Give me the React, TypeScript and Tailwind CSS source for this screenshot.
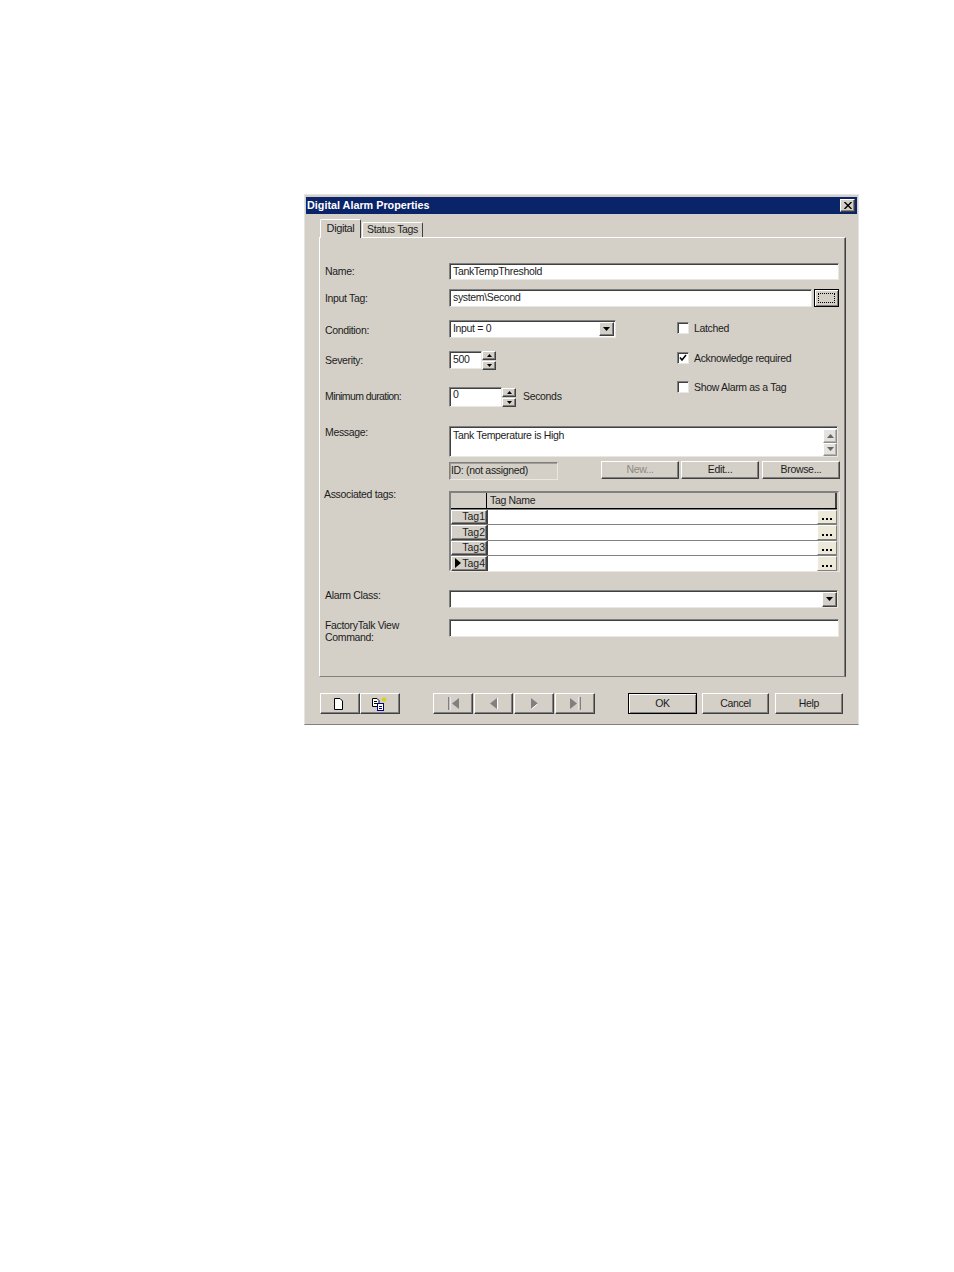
import type { ReactNode } from 'react';

const sunken = 'border border-t-[#808080] border-l-[#808080] border-r-[#e9e7e1] border-b-[#e9e7e1] shadow-[inset_1px_1px_0_#404040] bg-white';
const raised = 'border border-t-white border-l-white border-r-[#404040] border-b-[#404040] shadow-[inset_-1px_-1px_0_#808080] bg-[#d4d0c8]';

function Label({ children, className = '' }: { children: ReactNode; className?: string }) {
  return <div className={`w-[124px] shrink-0 leading-[12px] ${className}`}>{children}</div>;
}

function Btn({ children, className = '', disabled = false }: { children?: ReactNode; className?: string; disabled?: boolean }) {
  return (
    <button className={`${raised} flex items-center justify-center ${disabled ? 'text-[#8d8a84]' : ''} ${className}`}>
      {children}
    </button>
  );
}

function Arrow({ up = false, small = false }: { up?: boolean; small?: boolean }) {
  return (
    <svg width={small ? 5 : 7} height={small ? 3 : 4} viewBox="0 0 7 4" preserveAspectRatio="none" className={up ? '' : 'rotate-180'}>
      <path d="M3.5 0 L7 4 H0 Z" fill="#000" />
    </svg>
  );
}

function Spin() {
  return (
    <div className="flex flex-col gap-px">
      <Btn className="h-[9px] w-[14px]"><Arrow up small /></Btn>
      <Btn className="h-[9px] w-[14px]"><Arrow small /></Btn>
    </div>
  );
}

function Check({ label, checked = false, className = '' }: { label: string; checked?: boolean; className?: string }) {
  return (
    <div className={`flex items-center ${className}`}>
      <div className={`${sunken} h-[12px] w-[12px] flex items-center justify-center`}>
        {checked && (
          <svg width="8" height="8" viewBox="0 0 8 8">
            <path d="M1 3.5 L3 6 L7 1" stroke="#000" strokeWidth="1.5" fill="none" />
          </svg>
        )}
      </div>
      <span className="ml-[5px] leading-[12px]">{label}</span>
    </div>
  );
}

function TagRow({ name, current = false }: { name: string; current?: boolean }) {
  return (
    <div className="flex h-[15.4px] border-t border-[#808080] first:border-t-0">
      <div className={`${raised} w-[36px] flex items-center justify-end pr-[1px] text-[10.5px] tracking-normal`}>
        {current && (
          <svg width="6" height="10" viewBox="0 0 6 10" className="mr-[1px]">
            <path d="M0 0 L6 5 L0 10 Z" fill="#000" />
          </svg>
        )}
        {name}
      </div>
      <div className="flex-1 bg-white flex justify-end border-l border-[#404040]">
        <button className="w-[20px] bg-[#ece9d8] border border-t-white border-l-white border-r-[#808080] border-b-[#808080] flex items-end justify-center pb-[3px] gap-[2px]">
          <span className="w-[2px] h-[2px] bg-black" />
          <span className="w-[2px] h-[2px] bg-black" />
          <span className="w-[2px] h-[2px] bg-black" />
        </button>
      </div>
    </div>
  );
}

export default function App() {
  return (
    <div className="min-h-[1272px] bg-white pt-[194px] pl-[304px] text-[10.5px] tracking-[-0.33px] text-[#1c1c1c] font-['Liberation_Sans',Arial,sans-serif]">
      <div className="w-[555px] h-[531px] bg-[#d4d0c8] border border-t-[#e4e4e4] border-l-[#e4e4e4] border-r-[#e4e4e4] border-b-[#808080] px-[1px] pt-[2px]">
        {/* title bar */}
        <div className="h-[17px] bg-[#0a246a] flex items-center justify-between pl-[1px] pr-[2px] text-white font-bold text-[10.8px] tracking-normal">
          <span>Digital Alarm Properties</span>
          <button className={`${raised} w-[15px] h-[13px] flex items-center justify-center`}>
            <svg width="8" height="7" viewBox="0 0 8 7">
              <path d="M0.5 0 L7.5 7 M7.5 0 L0.5 7" stroke="#000" strokeWidth="1.4" />
            </svg>
          </button>
        </div>

        {/* tabs */}
        <div className="flex items-end h-[23px] pl-[14px] relative z-10">
          <div className="w-[41px] h-[19px] bg-[#d4d0c8] border border-t-white border-l-white border-r-[#404040] border-b-0 rounded-t-[2px] flex items-center justify-center text-[11px] tracking-[-0.4px] -mb-[1px] pb-[2px]">
            Digital
          </div>
          <div className="w-[61px] h-[15px] ml-[1px] bg-[#d4d0c8] border border-t-white border-l-white border-r-[#404040] border-b-0 rounded-t-[2px] flex items-center justify-center">
            Status Tags
          </div>
        </div>

        {/* tab page */}
        <div className="ml-[13px] w-[527px] h-[440px] border border-t-white border-l-white border-r-[#404040] border-b-[#808080] shadow-[inset_-1px_0_0_#808080] pl-[5px] pt-[25px]">
          <div className="flex items-center h-[17px]">
            <Label className="-mt-[1px]">Name:</Label>
            <div className={`${sunken} w-[390px] h-full pl-[3px] leading-[15px]`}>TankTempThreshold</div>
          </div>

          <div className="flex items-center h-[18px] mt-[9px]">
            <Label>Input Tag:</Label>
            <div className={`${sunken} w-[363px] h-full pl-[3px] leading-[15px]`}>system\Second</div>
            <button className="ml-[2px] w-[25px] h-[18px] border border-black bg-[#d4d0c8] shadow-[inset_1px_1px_0_#fff,inset_-1px_-1px_0_#808080] flex items-center justify-center">
              <span className="w-[17px] h-[10px] border border-dotted border-black" />
            </button>
          </div>

          <div className="flex mt-[13px]">
            <div className="w-[352px]">
              <div className="flex items-center h-[18px]">
                <Label className="mt-[2px]">Condition:</Label>
                <div className={`${sunken} w-[167px] h-full flex items-center justify-between pl-[3px]`}>
                  <span>Input = 0</span>
                  <Btn className="w-[15px] h-[14px] mr-[1px]"><Arrow /></Btn>
                </div>
              </div>
              <div className="flex items-center h-[18px] mt-[13px]">
                <Label>Severity:</Label>
                <div className={`${sunken} w-[33px] h-full pl-[3px] leading-[15px]`}>500</div>
                <Spin />
              </div>
              <div className="flex items-center h-[20px] mt-[18px]">
                <Label className="-mt-[2px] tracking-[-0.6px]">Minimum duration:</Label>
                <div className={`${sunken} w-[53px] h-full pl-[3px] leading-[13px]`}>0</div>
                <Spin />
                <span className="ml-[7px]">Seconds</span>
              </div>
            </div>
            <div className="pt-[2px]">
              <Check label="Latched" />
              <Check label="Acknowledge required" checked className="mt-[18px]" />
              <Check label="Show Alarm as a Tag" className="mt-[17px]" />
            </div>
          </div>

          <div className="flex h-[31px] mt-[19px]">
            <Label>Message:</Label>
            <div className={`${sunken} w-[389px] h-full pl-[3px] pt-[1px] flex justify-between`}>
              <span>Tank Temperature is High</span>
              <div className="flex flex-col pt-[1px]">
                <div className={`${raised} w-[14px] h-[14px] flex items-center justify-center opacity-60`}><Arrow up /></div>
                <div className={`${raised} w-[14px] h-[14px] flex items-center justify-center opacity-60`}><Arrow /></div>
              </div>
            </div>
          </div>

          <div className="flex h-[18px] mt-[4px]">
            <div className="w-[124px] shrink-0" />
            <div className="w-[109px] h-full mt-[1px] border border-t-[#808080] border-l-[#808080] border-r-[#e9e7e1] border-b-[#e9e7e1] pl-[1px] leading-[15px] shadow-[inset_1px_1px_0_#a09e98]">ID: (not assigned)</div>
            <Btn disabled className="w-[78px] h-full ml-[43px]">New...</Btn>
            <Btn className="w-[78px] h-full ml-[2px]">Edit...</Btn>
            <Btn className="w-[78px] h-full ml-[3px]">Browse...</Btn>
          </div>

          <div className="flex mt-[12px]">
            <Label className="-ml-[1px] mr-[1px] -mt-[3px]">Associated tags:</Label>
            <div className="w-[390px] h-[80px] border-2 border-[#808080] border-r-[#d4d0c8] border-b-[#d4d0c8] shadow-[1px_1px_0_#e9e7e1]">
              <div className="flex h-[16px] border-b border-black">
                <div className="w-[36px] border-r border-black" />
                <div className="flex-1 border-r-2 border-[#404040] pl-[3px] leading-[15px]">Tag Name</div>
              </div>
              <TagRow name="Tag1" />
              <TagRow name="Tag2" />
              <TagRow name="Tag3" />
              <TagRow name="Tag4" current />
            </div>
          </div>

          <div className="flex items-center h-[18px] mt-[19px]">
            <Label className="-mt-[8px]">Alarm Class:</Label>
            <div className={`${sunken} w-[389px] h-full flex items-center justify-end`}>
              <Btn className="w-[15px] h-[15px]"><Arrow /></Btn>
            </div>
          </div>

          <div className="flex h-[18px] mt-[11px]">
            <Label className="leading-[11px]">FactoryTalk View Command:</Label>
            <div className={`${sunken} w-[390px] h-full`} />
          </div>
        </div>

        {/* bottom buttons */}
        <div className="flex h-[21px] mt-[16px] ml-[14px]">
          <Btn className="w-[40px] h-full pr-[3px]">
            <svg width="9" height="12" viewBox="0 0 9 12">
              <path d="M0.5 0.5 H6 L8.5 3 V11.5 H0.5 Z" fill="#fff" stroke="#000" />
            </svg>
          </Btn>
          <Btn className="w-[40px] h-full">
            <svg width="16" height="14" viewBox="0 0 16 14">
              <path d="M0.5 1.5 H5 L7 3.5 V9.5 H0.5 Z" fill="#fff" stroke="#000" />
              <path d="M2 4.5 H5 M2 6.5 H5" stroke="#000" />
              <rect x="5.5" y="6.5" width="6" height="7" fill="#fff" stroke="#000080" />
              <path d="M7 9.5 H10 M7 11.5 H10" stroke="#000080" />
              <path d="M12 0 V5 M9.5 2.5 H14.5 M10 1 L14 4 M14 1 L10 4" stroke="#d8d000" />
            </svg>
          </Btn>
          <Btn className="w-[40px] h-full ml-[33px]">
            <svg width="13" height="13" viewBox="0 0 13 13">
              <path d="M1 0 H3 V13 H1 Z" fill="#808080" />
              <path d="M12 1 V12 L5 6.5 Z" fill="#808080" />
              <path d="M3 0 V13" stroke="#fff" strokeWidth="1" />
            </svg>
          </Btn>
          <Btn className="w-[39px] h-full ml-[1px]">
            <svg width="8" height="13" viewBox="0 0 8 13">
              <path d="M7 1 V12 L0 6.5 Z" fill="#808080" />
              <path d="M7.5 1 V12" stroke="#fff" />
            </svg>
          </Btn>
          <Btn className="w-[40px] h-full ml-[1px]">
            <svg width="8" height="13" viewBox="0 0 8 13">
              <path d="M1 1 V12 L8 6.5 Z" fill="#808080" />
              <path d="M1.5 12 L7.5 7" stroke="#fff" />
            </svg>
          </Btn>
          <Btn className="w-[40px] h-full ml-[1px]">
            <svg width="13" height="13" viewBox="0 0 13 13">
              <path d="M1 1 V12 L8 6.5 Z" fill="#808080" />
              <path d="M10 0 H12 V13 H10 Z" fill="#808080" />
              <path d="M10 0 V13" stroke="#fff" />
            </svg>
          </Btn>
          <button className="ml-[33px] w-[69px] h-full border border-black bg-[#d4d0c8] shadow-[inset_1px_1px_0_#fff,inset_-1px_-1px_0_#808080]">OK</button>
          <Btn className="w-[67px] h-full ml-[5px]">Cancel</Btn>
          <Btn className="w-[68px] h-full ml-[6px]">Help</Btn>
        </div>
      </div>
    </div>
  );
}
